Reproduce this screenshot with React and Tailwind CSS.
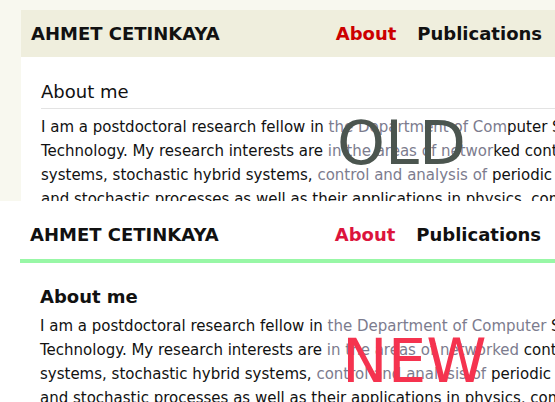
const linkCls = "text-[#7c7c8e]";

function Bio({ old }) {
  return (
    <p className="mt-[6px] whitespace-nowrap text-[15px] leading-[24px]">
      I am a postdoctoral research fellow in{" "}
      {old ? (
        <>
          <a className={linkCls}>the Department of Com</a>puter
        </>
      ) : (
        <a className={linkCls}>the Department of Computer</a>
      )}{" "}
      Science, Tokyo Institute of
      <br />
      Technology. My research interests are{" "}
      {old ? (
        <>
          <a className={linkCls}>in the areas of networ</a>ked
        </>
      ) : (
        <a className={linkCls}>in the areas of networked</a>
      )}{" "}
      control
      <br />
      systems, stochastic hybrid systems,{" "}
      <a className={linkCls}>control and analysis of</a> periodic
      <br />
      and stochastic processes as well as their applications in physics, computer
    </p>
  );
}

export default function App() {
  return (
    <div className="relative h-[402px] w-[555px] overflow-hidden bg-white font-['DejaVu_Sans',sans-serif] text-[#111]">
      {/* Old version */}
      <section className="h-[201px] overflow-hidden bg-[#f8f8ef] pl-[21px] pt-[10px]">
        <div className="w-[640px] bg-white">
          <header className="flex h-[47px] items-center bg-[#efeedd] px-[10px] text-[18px] font-bold">
            <span>AHMET CETINKAYA</span>
            <nav className="ml-[116px] flex gap-[21px]">
              <a className="text-[#cc0000]">About</a>
              <a>Publications</a>
            </nav>
          </header>
          <div className="px-[20px] pt-[24px]">
            <h2 className="border-b border-[#e3e3e3] pb-[5px] text-[18px] leading-[1.2]">
              About me
            </h2>
            <Bio old />
          </div>
        </div>
      </section>

      {/* New version */}
      <section className="h-[201px] overflow-hidden bg-white pl-[20px]">
        <div className="w-[640px]">
          <header className="flex h-[62px] items-start border-b-4 border-[#98f7a6] px-[10px] pt-[20px] text-[18px] font-bold leading-[1.5]">
            <span>AHMET CETINKAYA</span>
            <nav className="ml-[116px] flex gap-[21px]">
              <a className="text-[#dc143c]">About</a>
              <a>Publications</a>
            </nav>
          </header>
          <div className="px-[20px] pt-[23px]">
            <h2 className="text-[18px] font-bold leading-[1.2]">About me</h2>
            <Bio />
          </div>
        </div>
      </section>

      {/* Labels */}
      <span className="absolute left-[337px] top-[112px] text-[61px] leading-none text-[#4b554f]">
        OLD
      </span>
      <span className="absolute left-[342px] top-[330px] text-[61px] leading-none text-[#f5334f]">
        NEW
      </span>
    </div>
  );
}
